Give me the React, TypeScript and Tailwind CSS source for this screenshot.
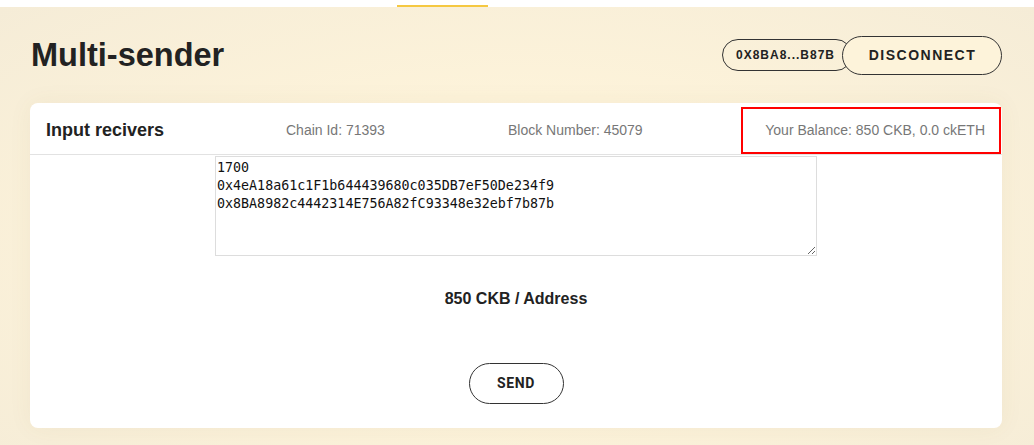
import React from 'react';

const receivers = `1700
0x4eA18a61c1F1b644439680c035DB7eF50De234f9
0x8BA8982c4442314E756A82fC93348e32ebf7b87b`;

export default function App() {
  return (
    <div className="h-[445px] w-[1034px] overflow-hidden font-['Liberation_Sans',Arial,sans-serif] text-[#222]">
      {/* top nav strip */}
      <div className="h-[7px] bg-white pl-[397px] pt-[5px]">
        <div className="h-[2px] w-[91px] bg-[#f5c842]" />
      </div>

      <div className="h-[438px] bg-[radial-gradient(ellipse_at_50%_55%,#fff8de_0%,#fdf3da_45%,#f5ecd7_100%)] pl-[30px] pr-[32px] pt-[28px]">
        {/* title row */}
        <div className="flex h-[40px] items-center justify-between">
          <h1 className="ml-px text-[32.5px] font-bold text-[#222]">Multi-sender</h1>
          <div className="flex items-center">
            <div className="flex h-[32px] items-center rounded-full border border-[#333] pl-[13px] pr-[16px] text-[12px] font-bold tracking-[1px] text-[#222]">
              0X8BA8...B87B
            </div>
            <button className="-ml-[10px] h-[39px] w-[160px] rounded-full border border-[#333] bg-[#fdf3da] pl-[1px] text-[14px] font-bold tracking-[1.5px] text-[#222]">
              DISCONNECT
            </button>
          </div>
        </div>

        {/* card */}
        <div className="mt-[28px] h-[325px] rounded-lg bg-white shadow-[0_0_24px_rgba(120,100,50,0.06)]">
          <div className="flex h-[52px] items-center border-b border-[#e2e2e2] pl-4 pt-[3px] text-[14px] text-[#777]">
            <div className="w-[240px] text-[18px] font-bold text-[#222]">Input recivers</div>
            <div className="w-[222px]">Chain Id: 71393</div>
            <div className="flex-1">Block Number: 45079</div>
            <div className="mr-px flex h-[47px] w-[260px] items-center justify-end self-end border-2 border-[#f00] pr-[14px]">
              Your Balance: 850 CKB, 0.0 ckETH
            </div>
          </div>

          <div className="flex flex-col items-center">
            <textarea
              defaultValue={receivers}
              className="mt-px h-[100px] w-[602px] border border-[#ddd] px-px pt-[2px] font-['DejaVu_Sans_Mono',monospace] text-[13.33px] leading-[18px] text-[#111] outline-none"
            />
            <div className="mt-[31px] text-[16px] font-bold text-[#222]">850 CKB / Address</div>
            <button className="mt-[52px] h-[41px] w-[95px] rounded-full border border-[#333] font-['Roboto',sans-serif] text-[14px] font-bold tracking-[0.6px] text-[#222]">
              SEND
            </button>
          </div>
        </div>
      </div>
    </div>
  );
}
